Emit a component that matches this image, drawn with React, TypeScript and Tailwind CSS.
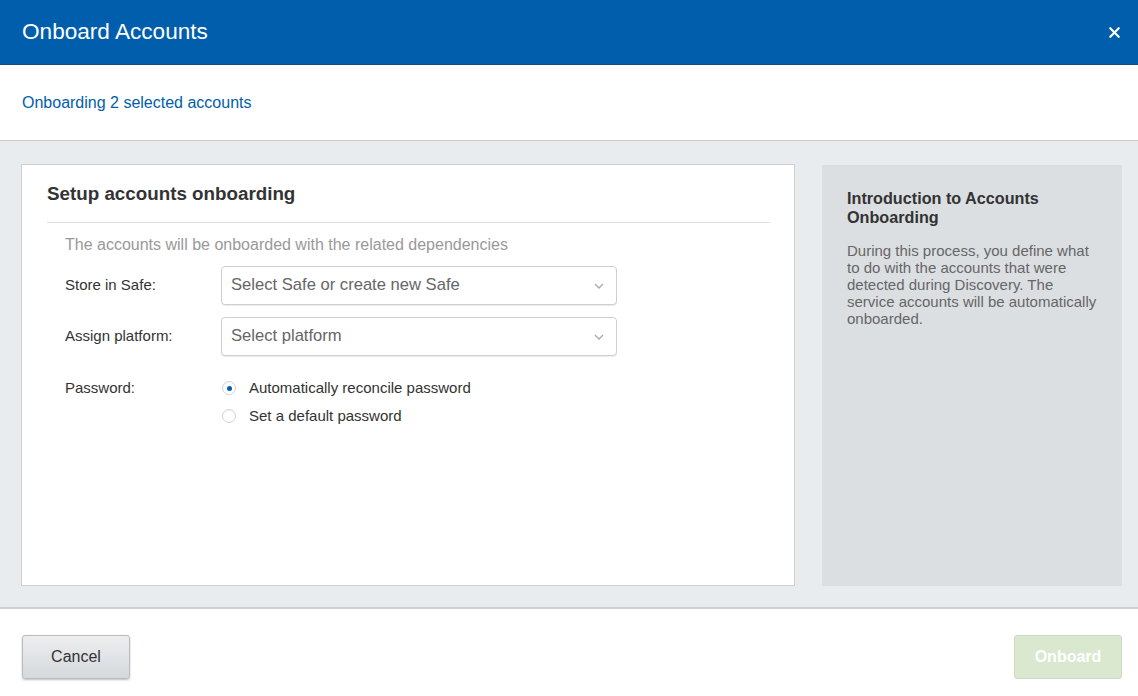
import { X } from 'lucide-react';

function Caret() {
  return (
    <svg width="10" height="6" viewBox="0 0 10 6" className="shrink-0">
      <path d="M1 1l4 4 4-4" fill="none" stroke="#a8a8a8" strokeWidth="1.3" />
    </svg>
  );
}

function SelectBox({ placeholder }: { placeholder: string }) {
  return (
    <div className="flex items-center justify-between w-[396px] h-[39px] pl-[9px] pr-[12px] border border-[#cfcfcf] rounded-[4px] bg-white shadow-[0_1px_1px_rgba(0,0,0,0.08)]">
      <span className="text-[16.6px] text-[#666]">{placeholder}</span>
      <Caret />
    </div>
  );
}

function Radio({ checked, label }: { checked?: boolean; label: string }) {
  return (
    <label className="flex items-center h-[28px]">
      <span className="w-[14px] h-[14px] ml-[1px] rounded-full border border-[#d4d4d4] bg-white flex items-center justify-center shadow-[inset_0_1px_1px_rgba(0,0,0,0.05)]">
        {checked && <span className="w-[5px] h-[5px] rounded-full bg-[#005eac]" />}
      </span>
      <span className="ml-[13px] text-[15px] text-[#333]">{label}</span>
    </label>
  );
}

export default function App() {
  return (
    <div
      className="flex flex-col w-[1138px] h-[696px] bg-white overflow-hidden"
      style={{ fontFamily: '"Liberation Sans", Arial, sans-serif' }}
    >
      {/* Header */}
      <div className="flex items-center justify-between h-[65px] pl-[22px] pr-[15px] bg-[#005eac] border-b border-[#0d4f86]">
        <h1 className="text-[22.6px] text-white">Onboard Accounts</h1>
        <X className="w-[17px] h-[17px] text-white" strokeWidth={3} />
      </div>

      {/* Subheader */}
      <div className="flex items-center h-[76px] pl-[22px] border-b border-[#c9cbcd]">
        <p className="text-[16px] text-[#005eac]">Onboarding 2 selected accounts</p>
      </div>

      {/* Body */}
      <div className="flex gap-[27px] h-[468px] pt-[23px] pb-[21px] pl-[21px] pr-[16px] bg-[#e9ecef] border-b-2 border-[#cdd0d3]">
        <div className="w-[774px] bg-white border border-[#cfcfcf] pl-[25px] pr-[24px] pt-[17px]">
          <h2 className="text-[18.8px] font-bold text-[#333] leading-[24px]">Setup accounts onboarding</h2>
          <div className="mt-[16px] border-t border-[#dedede]" />
          <div className="pl-[18px]">
            <p className="mt-[12px] text-[16px] text-[#999] leading-[20px]">
              The accounts will be onboarded with the related dependencies
            </p>
            <div className="mt-[11px] flex items-center">
              <span className="w-[156px] text-[15px] text-[#333]">Store in Safe:</span>
              <SelectBox placeholder="Select Safe or create new Safe" />
            </div>
            <div className="mt-[12px] flex items-center">
              <span className="w-[156px] text-[15px] text-[#333]">Assign platform:</span>
              <SelectBox placeholder="Select platform" />
            </div>
            <div className="mt-[18px] flex">
              <span className="w-[156px] text-[15px] text-[#333] leading-[28px]">Password:</span>
              <div className="flex flex-col">
                <Radio checked label="Automatically reconcile password" />
                <Radio label="Set a default password" />
              </div>
            </div>
          </div>
        </div>

        <div className="w-[300px] bg-[#dcdfe2] mt-[1px] pl-[25px] pr-[20px] pt-[24px]">
          <h3 className="text-[16.2px] font-bold text-[#333] leading-[19px]">
            Introduction to Accounts Onboarding
          </h3>
          <p className="mt-[15px] text-[15px] text-[#666] leading-[17px]">
            During this process, you define what to do with the accounts that were detected during Discovery. The
            service accounts will be automatically onboarded.
          </p>
        </div>
      </div>

      {/* Footer */}
      <div className="flex justify-between items-start flex-1 pt-[26px] pl-[22px] pr-[16px]">
        <button className="w-[108px] h-[44px] rounded-[3px] border border-[#b9bcbf] bg-gradient-to-b from-[#eceef0] to-[#d6d9dc] text-[16px] text-[#333] shadow-[0_1px_2px_rgba(0,0,0,0.25)]">
          Cancel
        </button>
        <button className="w-[108px] h-[44px] rounded-[3px] border border-[#c9dcbf] bg-[#d9e8cf] text-[16px] font-bold text-white">
          Onboard
        </button>
      </div>
    </div>
  );
}
